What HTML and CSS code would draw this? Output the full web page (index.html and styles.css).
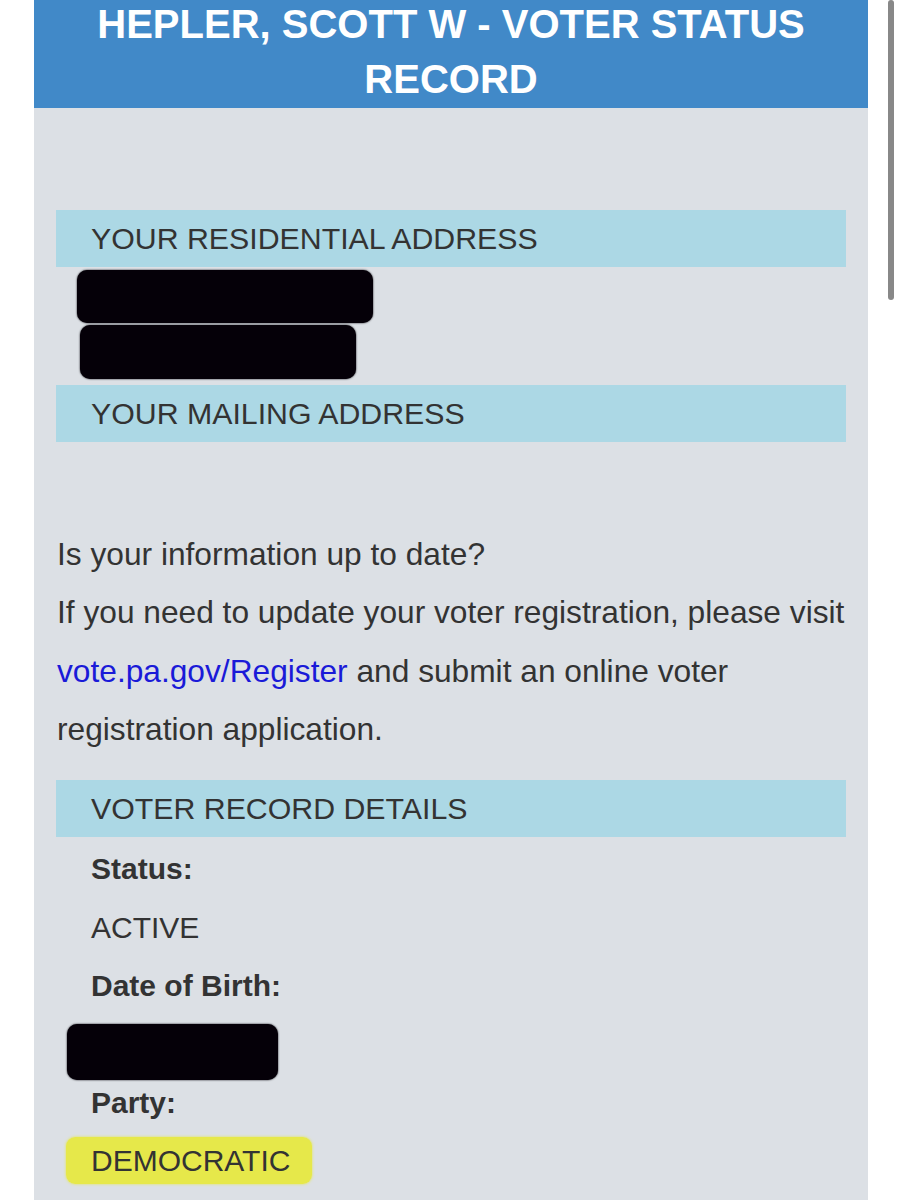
FILE: index.html
```html
<!DOCTYPE html>
<html>
  <head>
    <meta charset="utf-8">
    <title>Voter Status Record</title>
    <link rel="stylesheet" href="styles.css">
  </head>
  <body>
    <div class="record">
      <div class="banner">HEPLER, SCOTT W - VOTER STATUS RECORD</div>
      <div class="content">
        <div class="section-bar first">YOUR RESIDENTIAL ADDRESS</div>
        <div class="address">
          <div class="redact redact-line1"></div>
          <div class="redact redact-line2"></div>
        </div>
        <div class="section-bar">YOUR MAILING ADDRESS</div>

        <p class="notice">
          <span>Is your information up to date?</span><br>
          <span>If you need to update your voter registration, please visit</span>
          <a href="#" class="link">vote.pa.gov/Register</a>
          <span>and submit an online voter</span>
          <span>registration application.</span>
        </p>

        <div class="section-bar">VOTER RECORD DETAILS</div>
        <div class="details">
          <div class="label">Status:</div>
          <div class="value">ACTIVE</div>
          <div class="label">Date of Birth:</div>
          <div class="value"><div class="redact redact-dob"></div></div>
          <div class="label">Party:</div>
          <div class="value"><span class="highlight">DEMOCRATIC</span></div>
        </div>
      </div>
    </div>
    <div class="scrollbar"></div>
  </body>
</html>
```

FILE: styles.css
```css
/* Reset default styles */
* {
  margin: 0;
  padding: 0;
  box-sizing: border-box;
}

/* Page styles */
body {
  font-family: "Liberation Sans", Arial, sans-serif;
  background-color: #fff;
  color: #333;
  overflow: hidden;
}

.record {
  width: 834px;
  margin-left: 34px;
  margin-top: -3px;
  background-color: #dce0e5;
  min-height: 1210px;
}

.banner {
  background-color: #4189c8;
  color: #fff;
  font-size: 40px;
  font-weight: bold;
  line-height: 55px;
  text-align: center;
  padding: 0 30px 1px;
}

.content {
  padding: 0 22px;
}

.section-bar {
  background-color: #acd8e5;
  height: 57px;
  line-height: 57px;
  padding-left: 35px;
  font-size: 30.3px;
  color: #333;
}

.section-bar.first {
  margin-top: 102px;
}

.address {
  padding: 3px 0 6px;
}

.redact {
  background-color: #050008;
  border-radius: 10px;
  box-shadow: 0 0 2px #050008;
}

.redact-line1 {
  width: 296px;
  height: 53px;
  margin-left: 21px;
}

.redact-line2 {
  width: 276px;
  height: 54px;
  margin-left: 24px;
  margin-top: 2px;
}

.notice {
  margin-top: 83px;
  font-size: 31.7px;
  line-height: 58.3px;
  padding-left: 1px;
  margin-bottom: 22px;
}

.link {
  color: #1a1ad8;
  text-decoration: none;
}

.details {
  padding-top: 3px;
  padding-left: 35px;
  font-size: 30px;
  line-height: 58.5px;
}

.label {
  font-weight: bold;
}

.redact-dob {
  width: 211px;
  height: 56px;
  margin-left: -24px;
  margin-top: 8px;
  margin-bottom: -6px;
}

.highlight {
  background-color: #e6e84a;
  border-radius: 9px;
  padding: 7px 22px 7px 25px;
  margin-left: -25px;
  box-shadow: 0 0 3px #e6e84a;
}

.scrollbar {
  position: fixed;
  left: 888px;
  top: 0;
  width: 6px;
  height: 300px;
  background-color: #888;
  border-radius: 3px;
}
```
